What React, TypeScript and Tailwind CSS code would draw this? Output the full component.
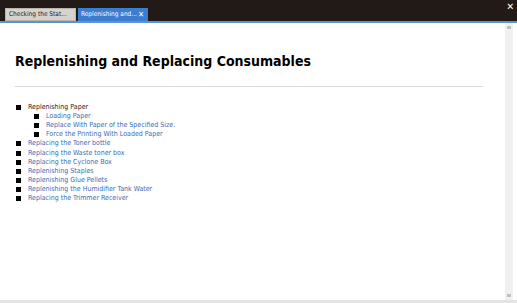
import React from "react";

const sub = [
  "Loading Paper",
  "Replace With Paper of the Specified Size.",
  "Force the Printing With Loaded Paper",
];
const items = [
  "Replacing the Toner bottle",
  "Replacing the Waste toner box",
  "Replacing the Cyclone Box",
  "Replenishing Staples",
  "Replenishing Glue Pellets",
  "Replenishing the Humidifier Tank Water",
  "Replacing the Trimmer Receiver",
];

function Bullet({ children, link = true }: { children: React.ReactNode; link?: boolean }) {
  return (
    <div className="flex items-center h-[9.1px]">
      <span className="w-[5px] h-[5px] bg-black mr-[7px] shrink-0" />
      <span className={link ? "text-[#3a6db5] whitespace-nowrap" : "text-[#2b2016] whitespace-nowrap"}>{children}</span>
    </div>
  );
}

export default function App() {
  return (
    <div className="w-[517px] h-[303px] bg-white flex flex-col overflow-hidden" style={{ fontFamily: "'DejaVu Sans Condensed', 'DejaVu Sans', Verdana, sans-serif" }}>
      <div className="h-[21px] bg-[#221a17] flex items-end pl-[5px] gap-[2px] relative">
        <div className="h-[13px] w-[71px] bg-[#d6d3cc] border border-[#b8b4ac] text-[6.5px] text-[#222] flex items-center pl-[3px] whitespace-nowrap overflow-hidden">
          Checking the Stat...
        </div>
        <div className="h-[13px] w-[70px] bg-[#3c7cd1] text-[6.5px] text-white flex items-center pl-[3px] whitespace-nowrap overflow-hidden">
          Replenishing and...
          <span className="ml-[1px] text-[8px] leading-none">✕</span>
        </div>
        <span className="absolute right-[3px] top-[2px] text-white text-[10px] font-bold leading-none">✕</span>
      </div>
      <div className="h-[2px] bg-[#5b93d6]" />
      <div className="flex-1 flex">
        <div className="flex-1 pl-[15px] pr-[22px]">
          <h1 className="mt-[31px] text-[14px] font-bold text-black leading-none whitespace-nowrap">
            Replenishing and Replacing Consumables
          </h1>
          <div className="mt-[18px] h-px bg-[#d9d9d9]" />
          <div className="mt-[16px] text-[7px] leading-none">
            <div className="pl-[1px]">
              <Bullet link={false}>Replenishing Paper</Bullet>
              <div className="pl-[18px]">
                {sub.map((s) => (
                  <Bullet key={s}>{s}</Bullet>
                ))}
              </div>
              {items.map((s) => (
                <Bullet key={s}>{s}</Bullet>
              ))}
            </div>
          </div>
        </div>
        <div className="w-[8px] mr-[4px] bg-[#f0f0f0] flex flex-col items-center justify-between py-[3px]">
          <div className="w-[4px] h-[3px] bg-[#c0c0c0]" />
          <div className="w-[4px] h-[3px] bg-[#c0c0c0]" />
        </div>
      </div>
      <div className="h-[3px] bg-[#e4e4e4]" />
    </div>
  );
}
